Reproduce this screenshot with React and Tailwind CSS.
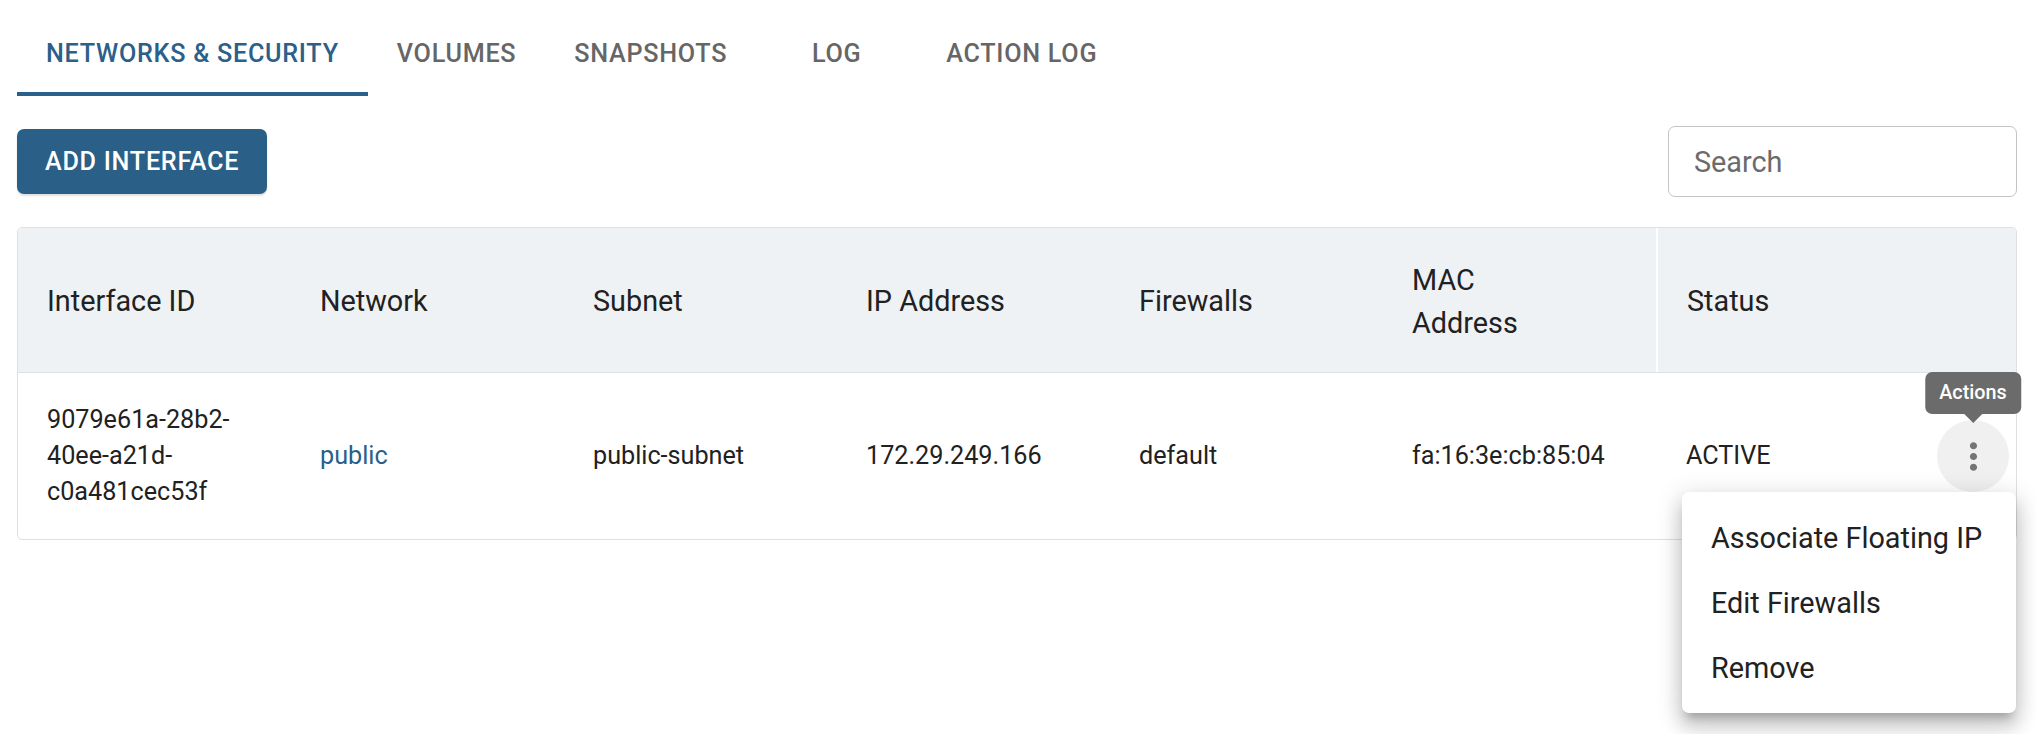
import React from "react";

const tabs = ["NETWORKS & SECURITY", "VOLUMES", "SNAPSHOTS", "LOG", "ACTION LOG"];

const cols = "grid grid-cols-[273px_273px_273px_273px_273px_273px_1fr]";

function MoreVert() {
  return (
    <svg viewBox="0 0 24 24" className="w-[43px] h-[43px] fill-[#757575]">
      <path d="M12 8c1.1 0 2-.9 2-2s-.9-2-2-2-2 .9-2 2 .9 2 2 2zm0 2c-1.1 0-2 .9-2 2s.9 2 2 2 2-.9 2-2-.9-2-2-2zm0 6c-1.1 0-2 .9-2 2s.9 2 2 2 2-.9 2-2-.9-2-2-2z" />
    </svg>
  );
}

export default function App() {
  return (
    <div
      className="w-[2036px] h-[734px] bg-white pl-[17px] pr-[19px] pt-[10px] text-[#212121]"
      style={{ fontFamily: "Roboto, 'Noto Sans', sans-serif" }}
    >
      {/* tabs */}
      <div className="flex h-[86px]">
        {tabs.map((t, i) => (
          <div
            key={t}
            className={
              "min-w-[161px] px-[29px] pt-[6px] flex items-center justify-center border-b-[4px] text-[25.2px] font-medium tracking-[0.72px] " +
              (i === 0
                ? "border-[#2a6089] text-[#2a6089]"
                : "border-transparent text-[#666666]")
            }
          >
            {t}
          </div>
        ))}
      </div>

      {/* toolbar */}
      <div className="mt-[30px] flex items-center justify-between h-[71px]">
        <button className="h-[65px] px-[28px] rounded-[7px] bg-[#2a6088] text-white text-[25.2px] font-medium tracking-[0.72px] shadow-[0_2px_2px_rgba(0,0,0,0.12)]">
          ADD INTERFACE
        </button>
        <input
          placeholder="Search"
          className="w-[349px] h-[71px] border border-[#c4c4c4] rounded-[7px] px-[25px] text-[28.8px] outline-none placeholder:text-[#6b6b6b]"
        />
      </div>

      {/* table */}
      <div className="mt-[30px] border border-[#e0e0e0] rounded-[5px]">
        <div
          className={
            cols +
            " h-[145px] bg-[#eef2f5] rounded-t-[5px] border-b border-[#e0e0e0] text-[28.8px] leading-[1.5]"
          }
        >
          <div className="px-[29px] pt-[4px] flex items-center">Interface ID</div>
          <div className="px-[29px] pt-[4px] flex items-center">Network</div>
          <div className="px-[29px] pt-[4px] flex items-center">Subnet</div>
          <div className="px-[29px] pt-[4px] flex items-center">IP Address</div>
          <div className="px-[29px] pt-[4px] flex items-center">Firewalls</div>
          <div className="px-[29px] pt-[4px] flex items-center">
            MAC
            <br />
            Address
          </div>
          <div className="px-[29px] pt-[4px] flex items-center border-l-2 border-white">
            Status
          </div>
        </div>

        <div className={cols + " items-center text-[25.2px] leading-[36px]"}>
          <div className="px-[29px] py-[29px] break-words">
            9079e61a-28b2-40ee-a21d-c0a481cec53f
          </div>
          <div className="px-[29px] text-[#2a6089]">public</div>
          <div className="px-[29px]">public-subnet</div>
          <div className="px-[29px]">172.29.249.166</div>
          <div className="px-[29px]">default</div>
          <div className="px-[29px]">fa:16:3e:cb:85:04</div>
          <div className="pl-[30px] pr-[7px] flex items-center justify-between">
            <span>ACTIVE</span>
            <div className="relative">
              <button className="w-[72px] h-[72px] rounded-full bg-[#f0f0f0] flex items-center justify-center">
                <MoreVert />
              </button>

              {/* tooltip */}
              <div className="absolute bottom-[calc(100%+6px)] left-1/2 -translate-x-1/2 bg-[#6b6b6b] text-white text-[19.8px] font-medium leading-[28px] px-[14px] py-[7px] rounded-[7px] whitespace-nowrap">
                Actions
                <span className="absolute top-full left-1/2 -translate-x-1/2 w-0 h-0 border-l-[9px] border-r-[9px] border-t-[9px] border-l-transparent border-r-transparent border-t-[#6b6b6b]" />
              </div>

              {/* menu */}
              <div className="absolute right-[-7px] top-full w-[334px] bg-white rounded-[7px] py-[13px] z-10 shadow-[0_9px_9px_-5px_rgba(0,0,0,0.2),0_14px_18px_2px_rgba(0,0,0,0.14),0_5px_25px_4px_rgba(0,0,0,0.12)]">
                {["Associate Floating IP", "Edit Firewalls", "Remove"].map((m) => (
                  <div
                    key={m}
                    className="h-[65px] px-[29px] flex items-center text-[28.8px] text-[#212121] whitespace-nowrap"
                  >
                    {m}
                  </div>
                ))}
              </div>
            </div>
          </div>
        </div>
      </div>
    </div>
  );
}
